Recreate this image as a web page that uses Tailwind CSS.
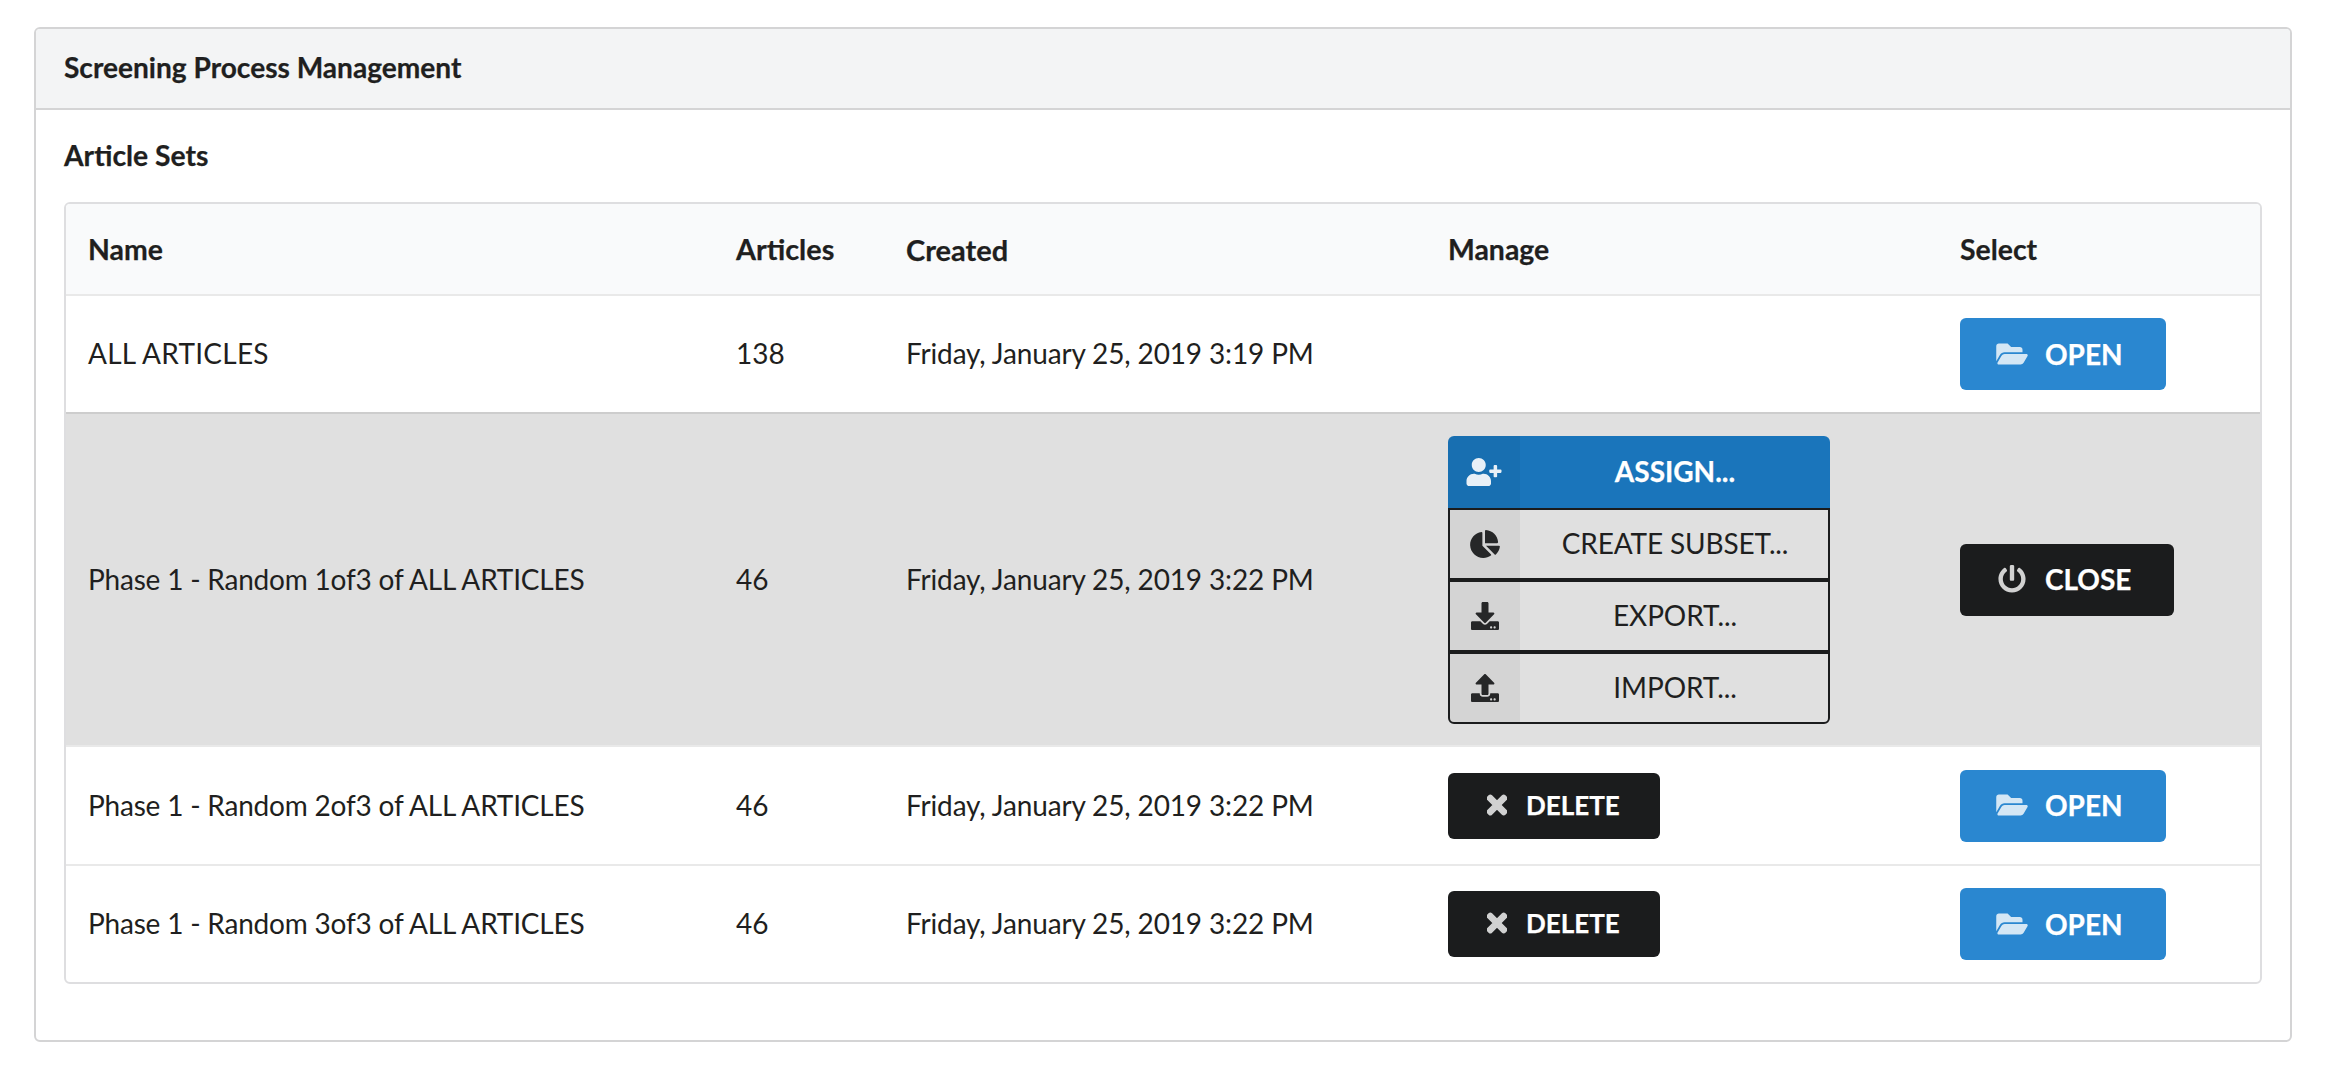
<!doctype html>
<html>
<head>
<meta charset="utf-8">
<script src="https://cdn.jsdelivr.net/npm/@tailwindcss/browser@4"></script>
</head>
<body class="bg-white font-['Lato',sans-serif] text-[28px] leading-none text-[#1f1f20]">
<div class="pt-[27px] pl-[34px] pb-[36px] w-[2338px]">
  <section class="w-[2258px] h-[1015px] border-2 border-[#d4d4d5] rounded-[6px] overflow-hidden">
    <header class="h-[81px] bg-[#f3f4f5] border-b-2 border-[#d4d4d5] flex items-center pl-[28px] pb-[3px] font-bold text-[28.1px] [-webkit-text-stroke:0.25px_currentColor]">Screening Process Management</header>
    <div class="pl-[28px]">
      <h2 class="h-[92px] flex items-center font-bold text-[28.3px] pb-[1px] [-webkit-text-stroke:0.25px_currentColor]">Article Sets</h2>
      <div class="w-[2198px] border-2 border-[#dedee0] rounded-[6px] overflow-hidden">
        <table class="w-full table-fixed border-separate border-spacing-0 text-left">
          <colgroup>
            <col class="w-[648px]"><col class="w-[170px]"><col class="w-[542px]"><col class="w-[512px]"><col>
          </colgroup>
          <thead class="bg-[#f9fafb] [-webkit-text-stroke:0.25px_currentColor]">
            <tr class="h-[90px]">
              <th class="pl-[22px] pt-[1px] font-bold text-[28.4px]">Name</th><th class="pl-[22px] pt-[1px] font-bold text-[28.8px]">Articles</th><th class="pl-[22px] pt-[1px] font-bold text-[29px]">Created</th><th class="pl-[22px] pt-[1px] font-bold text-[28.4px]">Manage</th><th class="pl-[22px] pt-[1px] font-bold text-[28.4px]">Select</th>
            </tr>
          </thead>
          <tbody>
            <tr class="h-[118px]">
              <td class="pl-[22px] pb-[2px] border-t-2 border-[#e9e9e9] tracking-[0.25px]">ALL ARTICLES</td>
              <td class="pl-[22px] pb-[2px] border-t-2 border-[#e9e9e9]">138</td>
              <td class="pl-[22px] pb-[2px] border-t-2 border-[#e9e9e9] tracking-[-0.14px]">Friday, January 25, 2019 3:19 PM</td>
              <td class="pl-[22px] border-t-2 border-[#e9e9e9]"></td>
              <td class="pl-[22px] border-t-2 border-[#e9e9e9]">
                <button class="w-[206px] h-[72px] rounded-[6px] bg-[#2a87d0] text-white font-bold flex items-center pl-[36px] pb-[1px] [-webkit-text-stroke:0.25px_currentColor]">
                  <svg class="w-[32px] h-[28px] mr-[17px] opacity-80 fill-current" viewBox="0 0 576 512"><path d="M572.694 292.093L500.27 416.248A63.997 63.997 0 0 1 444.989 448H45.025c-18.523 0-30.064-20.093-20.731-36.093l72.424-124.155A64 64 0 0 1 152 256h399.964c18.523 0 30.064 20.093 20.73 36.093zM152 224h328v-48c0-26.51-21.49-48-48-48H272l-64-64H48C21.49 64 0 85.49 0 112v278.046l69.077-118.418C86.214 242.25 117.989 224 152 224z"/></svg>OPEN</button>
              </td>
            </tr>
            <tr class="h-[333px] bg-[#e0e0e0]">
              <td class="pl-[22px] pb-[2px] border-t-2 border-[#cdcdcd] tracking-[-0.2px]">Phase 1 - Random 1of3 of ALL ARTICLES</td>
              <td class="pl-[22px] pb-[2px] border-t-2 border-[#cdcdcd]">46</td>
              <td class="pl-[22px] pb-[2px] border-t-2 border-[#cdcdcd] tracking-[-0.14px]">Friday, January 25, 2019 3:22 PM</td>
              <td class="pl-[22px] border-t-2 border-[#cdcdcd]">
                <div class="w-[382px] flex flex-col">
                  <button class="h-[72px] flex items-stretch rounded-t-[6px] bg-[#1a75bb] text-white font-bold overflow-hidden [-webkit-text-stroke:0.25px_currentColor]">
                    <span class="w-[72px] bg-black/5 flex items-center justify-center"><svg class="w-[36px] h-[28px] fill-current opacity-90" viewBox="0 0 640 512"><path d="M624 208h-64v-64c0-8.8-7.2-16-16-16h-32c-8.8 0-16 7.2-16 16v64h-64c-8.8 0-16 7.2-16 16v32c0 8.8 7.2 16 16 16h64v64c0 8.8 7.2 16 16 16h32c8.8 0 16-7.2 16-16v-64h64c8.8 0 16-7.2 16-16v-32c0-8.8-7.2-16-16-16zm-400 48c70.7 0 128-57.3 128-128S294.7 0 224 0 96 57.3 96 128s57.3 128 128 128zm89.6 32h-16.7c-22.2 10.2-46.9 16-72.9 16s-50.6-5.8-72.9-16h-16.7C60.2 288 0 348.2 0 422.4V464c0 26.5 21.5 48 48 48h352c26.5 0 48-21.5 48-48v-41.6c0-74.2-60.2-134.4-134.4-134.4z"/></svg></span>
                    <span class="flex-1 flex items-center justify-center pb-[2px]">ASSIGN...</span>
                  </button>
                  <button class="h-[72px] flex items-stretch border-2 border-[#1b1c1d] overflow-hidden">
                    <span class="w-[70px] bg-black/5 flex items-center justify-center"><svg class="w-[32px] h-[28px] fill-[#262728]" viewBox="0 0 544 512"><path d="M527.79 288H290.5l158.03 158.03c6.04 6.04 15.98 6.53 22.19.68 38.7-36.46 65.32-85.61 73.13-140.86 1.34-9.46-6.51-17.85-16.06-17.85zm-15.83-64.8C503.72 103.74 408.26 8.28 288.8.04 279.68-.59 272 7.1 272 16.24V240h223.77c9.14 0 16.82-7.68 16.19-16.8zM224 288V50.71c0-9.55-8.39-17.4-17.84-16.06C86.99 51.49-4.1 155.6.14 280.37 4.5 408.51 114.83 513.59 243.03 511.98c50.4-.63 96.97-16.87 135.26-44.03 7.9-5.6 8.42-17.23 1.57-24.08L224 288z"/></svg></span>
                    <span class="flex-1 flex items-center justify-center pb-[2px] pl-[2px] tracking-[-0.15px]">CREATE SUBSET...</span>
                  </button>
                  <button class="h-[72px] flex items-stretch border-2 border-[#1b1c1d] overflow-hidden">
                    <span class="w-[70px] bg-black/5 flex items-center justify-center"><svg class="w-[28px] h-[28px] fill-[#262728]" viewBox="0 0 512 512"><path d="M216 0h80c13.3 0 24 10.7 24 24v168h87.7c17.8 0 26.7 21.5 14.1 34.1L269.7 378.3c-7.5 7.5-19.8 7.5-27.3 0L90.1 226.1c-12.6-12.6-3.7-34.1 14.1-34.1H192V24c0-13.3 10.7-24 24-24zm296 376v112c0 13.3-10.7 24-24 24H24c-13.3 0-24-10.7-24-24V376c0-13.3 10.7-24 24-24h146.7l49 49c20.1 20.1 52.5 20.1 72.6 0l49-49H488c13.3 0 24 10.7 24 24zm-124 88c0-11-9-20-20-20s-20 9-20 20 9 20 20 20 20-9 20-20zm64 0c0-11-9-20-20-20s-20 9-20 20 9 20 20 20 20-9 20-20z"/></svg></span>
                    <span class="flex-1 flex items-center justify-center pb-[2px] pl-[2px] tracking-[-0.1px]">EXPORT...</span>
                  </button>
                  <button class="h-[72px] flex items-stretch border-2 border-[#1b1c1d] rounded-b-[6px] overflow-hidden">
                    <span class="w-[70px] bg-black/5 flex items-center justify-center"><svg class="w-[28px] h-[28px] fill-[#262728]" viewBox="0 0 512 512"><path d="M296 384h-80c-13.3 0-24-10.7-24-24V192h-87.7c-17.8 0-26.7-21.5-14.1-34.1L242.3 5.7c7.5-7.5 19.8-7.5 27.3 0l152.2 152.2c12.6 12.6 3.7 34.1-14.1 34.1H320v168c0 13.3-10.7 24-24 24zm216-8v112c0 13.3-10.7 24-24 24H24c-13.3 0-24-10.7-24-24V376c0-13.3 10.7-24 24-24h136v8c0 30.9 25.1 56 56 56h80c30.9 0 56-25.1 56-56v-8h136c13.3 0 24 10.7 24 24zm-124 88c0-11-9-20-20-20s-20 9-20 20 9 20 20 20 20-9 20-20zm64 0c0-11-9-20-20-20s-20 9-20 20 9 20 20 20 20-9 20-20z"/></svg></span>
                    <span class="flex-1 flex items-center justify-center pb-[2px] pl-[2px] tracking-[-0.1px]">IMPORT...</span>
                  </button>
                </div>
              </td>
              <td class="pl-[22px] border-t-2 border-[#cdcdcd]">
                <button class="w-[214px] h-[72px] rounded-[6px] bg-[#1b1c1d] text-white font-bold flex items-center pl-[38px] pb-[1px] [-webkit-text-stroke:0.25px_currentColor]">
                  <svg class="w-[28px] h-[28px] mr-[19px] opacity-80 fill-current" viewBox="0 0 512 512"><path d="M400 54.1c63 45 104 118.6 104 201.9 0 136.8-110.8 247.7-247.5 248C120 504.3 8.2 393 8 256.4 7.9 173.1 48.9 99.3 111.8 54.2c11.7-8.3 28-4.8 35 7.7L162.6 90c5.9 10.5 3.1 23.8-6.6 31-41.5 30.8-68 79.6-68 134.9-.1 92.3 74.5 168.1 168 168.1 91.6 0 168.6-74.2 168-169.1-.3-51.8-24.7-101.8-68.1-134-9.7-7.2-12.4-20.5-6.5-30.9l15.8-28.1c7-12.4 23.2-16.1 34.8-7.9zM296 264V24c0-13.3-10.7-24-24-24h-32c-13.3 0-24 10.7-24 24v240c0 13.3 10.7 24 24 24h32c13.3 0 24-10.7 24-24z"/></svg>CLOSE</button>
              </td>
            </tr>
            <tr class="h-[119px]">
              <td class="pl-[22px] pb-[2px] border-t-2 border-[#e9e9e9] tracking-[-0.2px]">Phase 1 - Random 2of3 of ALL ARTICLES</td>
              <td class="pl-[22px] pb-[2px] border-t-2 border-[#e9e9e9]">46</td>
              <td class="pl-[22px] pb-[2px] border-t-2 border-[#e9e9e9] tracking-[-0.14px]">Friday, January 25, 2019 3:22 PM</td>
              <td class="pl-[22px] border-t-2 border-[#e9e9e9]">
                <button class="w-[212px] h-[66px] rounded-[6px] bg-[#1b1c1d] text-white font-bold text-[26px] flex items-center pl-[39px] pb-[2px] [-webkit-text-stroke:0.25px_currentColor]">
                  <svg class="w-[20px] h-[28px] mr-[19px] opacity-80 fill-current stroke-current stroke-[28]" viewBox="0 0 352 512"><path d="M242.72 256l100.07-100.07c12.28-12.28 12.28-32.19 0-44.48l-22.24-22.24c-12.28-12.28-32.19-12.28-44.48 0L176 189.28 75.93 89.21c-12.28-12.28-32.19-12.28-44.48 0L9.21 111.45c-12.28 12.28-12.28 32.19 0 44.48L109.28 256 9.21 356.07c-12.28 12.28-12.28 32.19 0 44.48l22.24 22.24c12.28 12.28 32.2 12.28 44.48 0L176 322.72l100.07 100.07c12.28 12.28 32.2 12.28 44.48 0l22.24-22.24c12.28-12.28 12.28-32.19 0-44.48L242.72 256z"/></svg>DELETE</button>
              </td>
              <td class="pl-[22px] border-t-2 border-[#e9e9e9]">
                <button class="w-[206px] h-[72px] rounded-[6px] bg-[#2a87d0] text-white font-bold flex items-center pl-[36px] pb-[1px] [-webkit-text-stroke:0.25px_currentColor]">
                  <svg class="w-[32px] h-[28px] mr-[17px] opacity-80 fill-current" viewBox="0 0 576 512"><path d="M572.694 292.093L500.27 416.248A63.997 63.997 0 0 1 444.989 448H45.025c-18.523 0-30.064-20.093-20.731-36.093l72.424-124.155A64 64 0 0 1 152 256h399.964c18.523 0 30.064 20.093 20.73 36.093zM152 224h328v-48c0-26.51-21.49-48-48-48H272l-64-64H48C21.49 64 0 85.49 0 112v278.046l69.077-118.418C86.214 242.25 117.989 224 152 224z"/></svg>OPEN</button>
              </td>
            </tr>
            <tr class="h-[118px]">
              <td class="pl-[22px] pb-[2px] border-t-2 border-[#e9e9e9] tracking-[-0.2px]">Phase 1 - Random 3of3 of ALL ARTICLES</td>
              <td class="pl-[22px] pb-[2px] border-t-2 border-[#e9e9e9]">46</td>
              <td class="pl-[22px] pb-[2px] border-t-2 border-[#e9e9e9] tracking-[-0.14px]">Friday, January 25, 2019 3:22 PM</td>
              <td class="pl-[22px] border-t-2 border-[#e9e9e9]">
                <button class="w-[212px] h-[66px] rounded-[6px] bg-[#1b1c1d] text-white font-bold text-[26px] flex items-center pl-[39px] pb-[2px] [-webkit-text-stroke:0.25px_currentColor]">
                  <svg class="w-[20px] h-[28px] mr-[19px] opacity-80 fill-current stroke-current stroke-[28]" viewBox="0 0 352 512"><path d="M242.72 256l100.07-100.07c12.28-12.28 12.28-32.19 0-44.48l-22.24-22.24c-12.28-12.28-32.19-12.28-44.48 0L176 189.28 75.93 89.21c-12.28-12.28-32.19-12.28-44.48 0L9.21 111.45c-12.28 12.28-12.28 32.19 0 44.48L109.28 256 9.21 356.07c-12.28 12.28-12.28 32.19 0 44.48l22.24 22.24c12.28 12.28 32.2 12.28 44.48 0L176 322.72l100.07 100.07c12.28 12.28 32.2 12.28 44.48 0l22.24-22.24c12.28-12.28 12.28-32.19 0-44.48L242.72 256z"/></svg>DELETE</button>
              </td>
              <td class="pl-[22px] border-t-2 border-[#e9e9e9]">
                <button class="w-[206px] h-[72px] rounded-[6px] bg-[#2a87d0] text-white font-bold flex items-center pl-[36px] pb-[1px] [-webkit-text-stroke:0.25px_currentColor]">
                  <svg class="w-[32px] h-[28px] mr-[17px] opacity-80 fill-current" viewBox="0 0 576 512"><path d="M572.694 292.093L500.27 416.248A63.997 63.997 0 0 1 444.989 448H45.025c-18.523 0-30.064-20.093-20.731-36.093l72.424-124.155A64 64 0 0 1 152 256h399.964c18.523 0 30.064 20.093 20.73 36.093zM152 224h328v-48c0-26.51-21.49-48-48-48H272l-64-64H48C21.49 64 0 85.49 0 112v278.046l69.077-118.418C86.214 242.25 117.989 224 152 224z"/></svg>OPEN</button>
              </td>
            </tr>
          </tbody>
        </table>
      </div>
    </div>
  </section>
</div>
</body>
</html>
